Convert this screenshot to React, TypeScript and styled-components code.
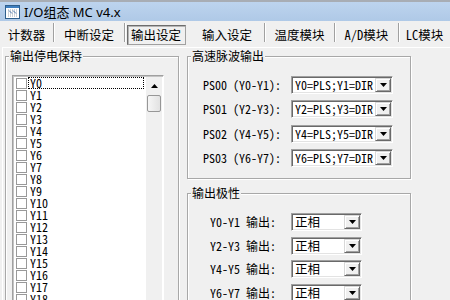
import React from 'react';
import styled, { createGlobalStyle } from 'styled-components';

const MONO = `"Noto Sans Mono CJK SC", "Liberation Mono", monospace`;
const SANS = `"Noto Sans", "Noto Sans CJK SC", sans-serif`;
const CJK = `"Noto Sans CJK SC", "Noto Sans", sans-serif`;

const TABS = [
  { label: '计数器', width: 53 },
  { label: '中断设定', width: 70 },
  { label: '输出设定', width: 65, active: true },
  { label: '输入设定', width: 74 },
  { label: '温度模块', width: 69 },
  { label: 'A/D模块', width: 63 },
  { label: 'LC模块', width: 51 },
];

const OUTPUTS = Array.from({ length: 24 }, (_, i) => `Y${i}`);

const PULSES = [
  { label: 'PS00 (Y0-Y1):', value: 'Y0=PLS;Y1=DIR' },
  { label: 'PS01 (Y2-Y3):', value: 'Y2=PLS;Y3=DIR' },
  { label: 'PS02 (Y4-Y5):', value: 'Y4=PLS;Y5=DIR' },
  { label: 'PS03 (Y6-Y7):', value: 'Y6=PLS;Y7=DIR' },
];

const POLARITY = ['Y0-Y1 输出:', 'Y2-Y3 输出:', 'Y4-Y5 输出:', 'Y6-Y7 输出:'];

export default function App() {
  return (
    <>
      <GlobalStyle />
      <Window>
        <TitleBar>
          <AppIcon />
          <Title>I/O组态 MC v4.x</Title>
        </TitleBar>

        <TabStrip>
          {TABS.map((tab, i) => {
            const sep = !tab.active && i < TABS.length - 1;
            return (
              <React.Fragment key={tab.label}>
                <Tab $width={tab.width}>
                  {tab.active ? <ActiveTab>{tab.label}</ActiveTab> : tab.label}
                </Tab>
                {sep && <TabSep />}
              </React.Fragment>
            );
          })}
        </TabStrip>

        <Panel>
          <Group $width={174} $height={260} $pad="18px 14px 0 6px">
            <Legend>输出停电保持</Legend>
            <ListBox>
              <ListItems>
                {OUTPUTS.map((name, i) => (
                  <ListRow key={name}>
                    <Check />
                    <ItemLabel $focused={i === 0}>{name}</ItemLabel>
                  </ListRow>
                ))}
              </ListItems>
              <ScrollBar>
                <ScrollButton>
                  <svg width="7" height="4" viewBox="0 0 7 4">
                    <polygon points="0,4 3.5,0 7,4" fill="#000" />
                  </svg>
                </ScrollButton>
                <Thumb />
              </ScrollBar>
            </ListBox>
          </Group>

          <RightColumn>
            <Group $width={224} $height={123} $pad="19px 0 0 15px">
              <Legend>高速脉波输出</Legend>
              <FormGrid $label={88} $gap={6.4}>
                {PULSES.map((p) => (
                  <React.Fragment key={p.label}>
                    <FieldLabel>{p.label}</FieldLabel>
                    <Combo $width={102} value={p.value} />
                  </React.Fragment>
                ))}
              </FormGrid>
            </Group>

            <Group $width={224} $height={130} $pad="19px 0 0 22px" $top={14}>
              <Legend>输出极性</Legend>
              <FormGrid $label={81} $gap={5.7}>
                {POLARITY.map((label) => (
                  <React.Fragment key={label}>
                    <FieldLabel>{label}</FieldLabel>
                    <Combo $width={71} value="正相" $cjk />
                  </React.Fragment>
                ))}
              </FormGrid>
            </Group>
          </RightColumn>
        </Panel>
      </Window>
    </>
  );
}

function AppIcon() {
  return (
    <svg width="15" height="14" viewBox="0 0 15 14">
      <rect x="0.5" y="0.5" width="14" height="13" fill="#fff" stroke="#2f5f8c" />
      <rect x="1" y="1" width="13" height="2" fill="#3f7fbf" />
      <path d="M3 5h9M3 7h9M3 9h9M3 11h9" stroke="#9aa4b0" strokeDasharray="1 1" />
      <path d="M4 5.5l3 3M8 5.5l3 3" stroke="#4a78b0" />
    </svg>
  );
}

function Combo({ value, $width, $cjk }: { value: string; $width: number; $cjk?: boolean }) {
  return (
    <ComboBox $width={$width}>
      <ComboText $cjk={$cjk}>{value}</ComboText>
      <ComboButton>
        <svg width="7" height="4" viewBox="0 0 7 4">
          <polygon points="0,0 7,0 3.5,4" fill="#000" />
        </svg>
      </ComboButton>
    </ComboBox>
  );
}

const GlobalStyle = createGlobalStyle`
  *, *::before, *::after { box-sizing: border-box; }
  html, body { margin: 0; padding: 0; background: #f0f0f0; }
`;

const Window = styled.div`
  width: 450px;
  height: 300px;
  overflow: hidden;
  background: #f0f0f0;
  color: #000;
`;

const TitleBar = styled.div`
  height: 21px;
  border-top: 2px solid #a8adb4;
  background: linear-gradient(to bottom, #bdd4ee, #afc9e7);
  display: flex;
  align-items: center;
  gap: 4px;
  padding-left: 5px;
`;

const Title = styled.span`
  font-family: ${SANS};
  font-size: 13px;
  line-height: 16px;
  color: #000;
`;

const TabStrip = styled.div`
  height: 26px;
  display: flex;
  align-items: flex-start;
`;

const Tab = styled.div<{ $width: number }>`
  width: ${(p) => p.$width}px;
  height: 20px;
  margin-top: 4px;
  display: flex;
  align-items: center;
  justify-content: center;
  flex-shrink: 0;
  font-family: ${MONO};
  font-size: 12.5px;
  line-height: 14px;
  white-space: nowrap;
`;

const ActiveTab = styled.div`
  width: 59px;
  height: 20px;
  margin-left: -3px;
  display: flex;
  align-items: center;
  justify-content: center;
  border: 1px solid;
  border-color: #6d6d6d #a0a0a0 #a0a0a0 #6d6d6d;
  box-shadow: inset 1px 1px 0 #b4b4b4;
`;

const TabSep = styled.div`
  width: 1px;
  height: 19px;
  margin-top: 2px;
  flex-shrink: 0;
  background: #a0a0a0;
  box-shadow: 1px 0 0 #fff;
`;

const Panel = styled.div`
  margin-left: 2px;
  height: 253px;
  border-top: 1px solid #fff;
  border-left: 1px solid #fff;
  padding: 8px 0 0 2px;
  display: flex;
  align-items: flex-start;
`;

const Group = styled.div<{ $width: number; $height: number; $pad: string; $top?: number }>`
  position: relative;
  flex-shrink: 0;
  width: ${(p) => p.$width}px;
  height: ${(p) => p.$height}px;
  margin-top: ${(p) => p.$top ?? 0}px;
  padding: ${(p) => p.$pad};
  border: 1px solid #a8a8a8;
  box-shadow: inset 1px 1px 0 #fff, 1px 1px 0 #fff;
`;

const Legend = styled.span`
  position: absolute;
  top: -8px;
  left: 3px;
  padding: 0 1px;
  background: #f0f0f0;
  font-family: ${CJK};
  font-size: 12px;
  line-height: 14px;
  white-space: nowrap;
`;

const ListBox = styled.div`
  width: 152px;
  height: 240px;
  display: flex;
  overflow: hidden;
  background: #fff;
  border: 1px solid;
  border-color: #a0a0a0 #fff #fff #a0a0a0;
  padding: 1px;
  box-shadow: inset 1px 1px 0 #c4c4c4;
`;

const ListItems = styled.div`
  flex: 1;
  display: flex;
  flex-direction: column;
`;

const ListRow = styled.div`
  height: 12px;
  flex-shrink: 0;
  display: flex;
  align-items: center;
`;

const Check = styled.span`
  width: 11px;
  height: 11px;
  margin-left: 2px;
  flex-shrink: 0;
  background: #fff;
  border: 1px solid #999;
`;

const ItemLabel = styled.span<{ $focused?: boolean }>`
  flex: 1;
  height: 12px;
  margin: 0 2px 0 1px;
  padding-left: 2px;
  outline: 1px dotted ${(p) => (p.$focused ? '#000' : 'transparent')};
  outline-offset: -1px;
  font-family: ${MONO};
  font-size: 12px;
  line-height: 12px;
`;

const ScrollBar = styled.div`
  width: 16px;
  flex-shrink: 0;
  background: #f0f0f0;
  display: flex;
  flex-direction: column;
`;

const ScrollButton = styled.div`
  height: 17px;
  display: flex;
  align-items: center;
  justify-content: center;
`;

const Thumb = styled.div`
  height: 17px;
  margin: 1px 1px 0;
  border: 1px solid #979797;
  border-radius: 2px;
  background: linear-gradient(to right, #f6f6f6, #e2e2e2);
`;

const RightColumn = styled.div`
  margin-left: 8px;
  display: flex;
  flex-direction: column;
`;

const FormGrid = styled.div<{ $label: number; $gap: number }>`
  display: grid;
  grid-template-columns: ${(p) => p.$label}px auto;
  row-gap: ${(p) => p.$gap}px;
  align-items: center;
  justify-items: start;
`;

const FieldLabel = styled.span`
  font-family: ${MONO};
  font-size: 12px;
  line-height: 14px;
  white-space: pre;
`;

const ComboBox = styled.div<{ $width: number }>`
  width: ${(p) => p.$width}px;
  height: 18px;
  display: flex;
  background: #fff;
  border: 1px solid;
  border-color: #a0a0a0 #fff #fff #a0a0a0;
  box-shadow: inset 1px 1px 0 #696969, inset -1px -1px 0 #e3e3e3;
  padding: 1px;
`;

const ComboText = styled.span<{ $cjk?: boolean }>`
  flex: 1;
  padding-left: 2px;
  font-family: ${(p) => (p.$cjk ? CJK : MONO)};
  font-size: ${(p) => (p.$cjk ? 12.5 : 12)}px;
  line-height: 14px;
  white-space: nowrap;
  overflow: hidden;
`;

const ComboButton = styled.span`
  width: 16px;
  flex-shrink: 0;
  display: flex;
  align-items: center;
  justify-content: center;
  background: #f0f0f0;
  border: 1px solid;
  border-color: #d8d8d8 #696969 #696969 #d8d8d8;
  box-shadow: inset 1px 1px 0 #fff, inset -1px -1px 0 #a0a0a0;
`;
